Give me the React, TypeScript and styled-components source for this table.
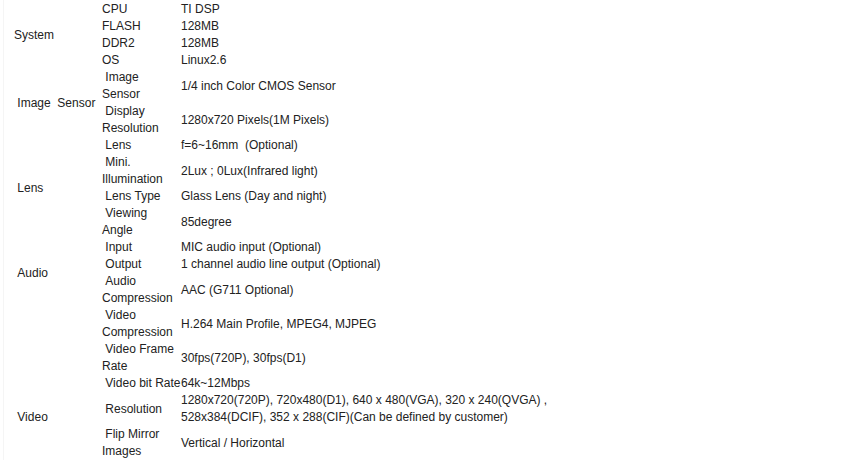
import styled, { createGlobalStyle } from "styled-components";

const GlobalStyle = createGlobalStyle`
  html, body {
    margin: 0;
    background: #fff;
  }
  body {
    font-family: "Liberation Sans", Arial, sans-serif;
    font-size: 12px;
    color: #222;
  }
`;

const Page = styled.div`
  margin-left: 3px;
  border-left: 1px solid #f5f5f5;
  min-height: 100vh;
`;

const Sheet = styled.div`
  display: flex;
  flex-direction: column;
  padding-top: 1px;
`;

const Group = styled.div`
  display: grid;
  grid-template-columns: 98px 1fr;
`;

// $below: height of the rows of this group that run on past the fold
const Category = styled.div<{ $below?: number; $pad?: number }>`
  display: flex;
  align-items: center;
  padding-left: ${(p) => p.$pad ?? 10}px;
  padding-top: ${(p) => p.$below ?? 0}px;
  line-height: 17px;
  white-space: pre;
`;

const Rows = styled.div`
  display: flex;
  flex-direction: column;
`;

const Row = styled.div`
  display: grid;
  grid-template-columns: 79px 1fr;
  align-items: center;
  line-height: 17px;
`;

const Label = styled.div`
  white-space: nowrap;
`;

const Value = styled.div`
  white-space: nowrap;
`;

const Line = styled.div``;

type Spec = { label: string[]; value: string[] };

const groups: { name: string; pad?: number; below?: number; rows: Spec[] }[] = [
  {
    name: "System",
    pad: 10,
    rows: [
      { label: ["CPU"], value: ["TI DSP"] },
      { label: ["FLASH"], value: ["128MB"] },
      { label: ["DDR2"], value: ["128MB"] },
      { label: ["OS"], value: ["Linux2.6"] },
    ],
  },
  {
    name: "\u00a0Image\u00a0\u00a0Sensor",
    rows: [
      { label: ["\u00a0Image", "Sensor"], value: ["1/4 inch Color CMOS Sensor"] },
      { label: ["\u00a0Display", "Resolution"], value: ["1280x720 Pixels(1M Pixels)"] },
    ],
  },
  {
    name: "\u00a0Lens",
    rows: [
      { label: ["\u00a0Lens"], value: ["f=6~16mm\u00a0 (Optional)"] },
      { label: ["\u00a0Mini.", "Illumination"], value: ["2Lux ; 0Lux(Infrared light)"] },
      { label: ["\u00a0Lens Type"], value: ["Glass Lens (Day and night)"] },
      { label: ["\u00a0Viewing", "Angle"], value: ["85degree"] },
    ],
  },
  {
    name: "\u00a0Audio",
    rows: [
      { label: ["\u00a0Input"], value: ["MIC audio input (Optional)"] },
      { label: ["\u00a0Output"], value: ["1 channel audio line output (Optional)"] },
      { label: ["\u00a0Audio", "Compression"], value: ["AAC (G711 Optional)"] },
    ],
  },
  {
    name: "\u00a0Video",
    below: 68,
    rows: [
      { label: ["\u00a0Video", "Compression"], value: ["H.264 Main Profile, MPEG4, MJPEG"] },
      { label: ["\u00a0Video Frame", "Rate"], value: ["30fps(720P), 30fps(D1)"] },
      { label: ["\u00a0Video bit Rate"], value: ["64k~12Mbps"] },
      {
        label: ["\u00a0Resolution"],
        value: [
          "1280x720(720P), 720x480(D1), 640 x 480(VGA), 320 x 240(QVGA) ,",
          "528x384(DCIF), 352 x 288(CIF)(Can be defined by customer)",
        ],
      },
      { label: ["\u00a0Flip Mirror", "Images"], value: ["Vertical / Horizontal"] },
    ],
  },
];

export default function App() {
  return (
    <>
      <GlobalStyle />
      <Page>
        <Sheet>
          {groups.map((g) => (
            <Group key={g.name}>
              <Category $pad={g.pad} $below={g.below}>{g.name}</Category>
              <Rows>
                {g.rows.map((r) => (
                  <Row key={r.label.join(" ")}>
                    <Label>
                      {r.label.map((l) => (
                        <Line key={l}>{l}</Line>
                      ))}
                    </Label>
                    <Value>
                      {r.value.map((v) => (
                        <Line key={v}>{v}</Line>
                      ))}
                    </Value>
                  </Row>
                ))}
              </Rows>
            </Group>
          ))}
        </Sheet>
      </Page>
    </>
  );
}
